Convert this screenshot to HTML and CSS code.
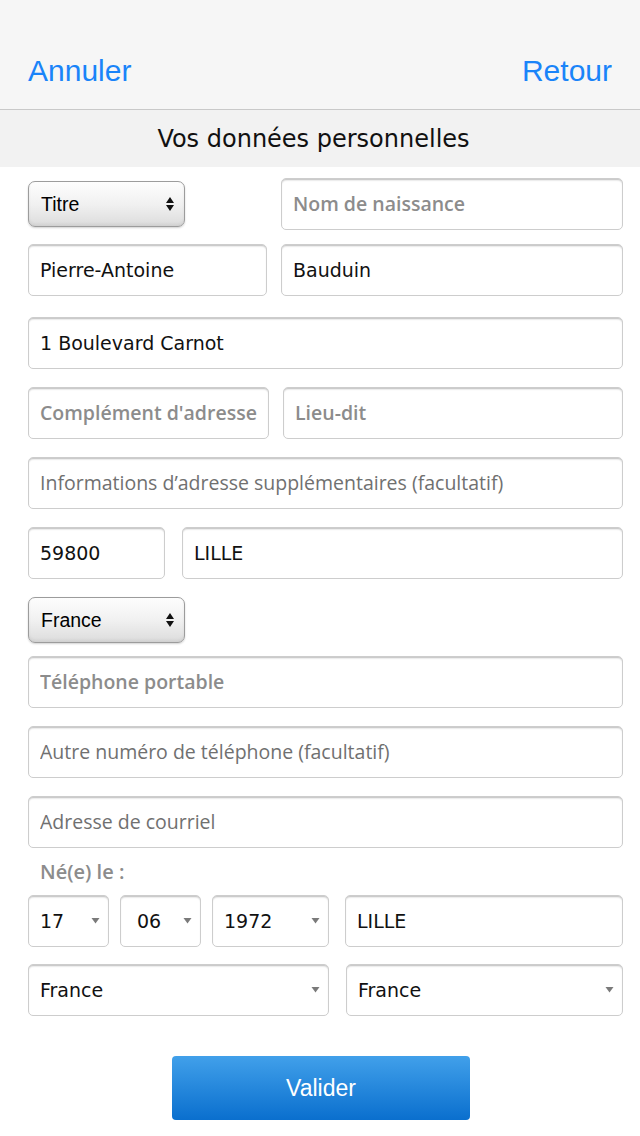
FILE: index.html
```html
<!DOCTYPE html>
<html lang="fr">
<head>
<meta charset="utf-8">
<title>Vos données personnelles</title>
<link rel="stylesheet" href="styles.css">
</head>
<body>
<header class="navbar">
  <a class="nav-btn" href="#">Annuler</a>
  <a class="nav-btn" href="#">Retour</a>
</header>
<div class="section-title">Vos données personnelles</div>
<form class="form">
  <div class="row row-first">
    <div class="select-wrap w-titre">
      <select class="ios-select"><option>Titre</option></select>
      <svg class="updown" width="10" height="16" viewBox="0 0 10 16"><path d="M5 1 L9 7 L1 7 Z M1 9 L9 9 L5 15 Z" fill="#111"/></svg>
    </div>
    <input class="field w-342 ph-bold" type="text" placeholder="Nom de naissance">
  </div>
  <div class="row row-tight">
    <input class="field grow" type="text" value="Pierre-Antoine">
    <input class="field w-342" type="text" value="Bauduin">
  </div>
  <div class="row row-loose">
    <input class="field grow" type="text" value="1 Boulevard Carnot">
  </div>
  <div class="row">
    <input class="field grow ph-bold" type="text" placeholder="Complément d'adresse">
    <input class="field w-340 ph-bold" type="text" placeholder="Lieu-dit">
  </div>
  <div class="row">
    <input class="field grow" type="text" placeholder="Informations d’adresse supplémentaires (facultatif)">
  </div>
  <div class="row row-gap17">
    <input class="field w-136" type="text" value="59800">
    <input class="field grow" type="text" value="LILLE">
  </div>
  <div class="row">
    <div class="select-wrap w-titre">
      <select class="ios-select"><option>France</option></select>
      <svg class="updown" width="10" height="16" viewBox="0 0 10 16"><path d="M5 1 L9 7 L1 7 Z M1 9 L9 9 L5 15 Z" fill="#111"/></svg>
    </div>
  </div>
  <div class="row row-after-select">
    <input class="field grow ph-bold" type="text" placeholder="Téléphone portable">
  </div>
  <div class="row">
    <input class="field grow" type="text" placeholder="Autre numéro de téléphone (facultatif)">
  </div>
  <div class="row">
    <input class="field grow" type="email" placeholder="Adresse de courriel">
  </div>
  <div class="birth-label">Né(e) le :</div>
  <div class="row row-date">
    <div class="select-wrap w-81">
      <select class="field-select"><option>17</option></select>
      <svg class="down" width="9" height="7" viewBox="0 0 9 7"><path d="M0.5 1 L8.5 1 L4.5 6.5 Z" fill="#7a7a7a"/></svg>
    </div>
    <div class="select-wrap w-81">
      <select class="field-select center"><option>06</option></select>
      <svg class="down" width="9" height="7" viewBox="0 0 9 7"><path d="M0.5 1 L8.5 1 L4.5 6.5 Z" fill="#7a7a7a"/></svg>
    </div>
    <div class="select-wrap w-117">
      <select class="field-select"><option>1972</option></select>
      <svg class="down" width="9" height="7" viewBox="0 0 9 7"><path d="M0.5 1 L8.5 1 L4.5 6.5 Z" fill="#7a7a7a"/></svg>
    </div>
    <input class="field grow city" type="text" value="LILLE">
  </div>
  <div class="row row-country">
    <div class="select-wrap grow">
      <select class="field-select"><option>France</option></select>
      <svg class="down" width="9" height="7" viewBox="0 0 9 7"><path d="M0.5 1 L8.5 1 L4.5 6.5 Z" fill="#7a7a7a"/></svg>
    </div>
    <div class="select-wrap w-277">
      <select class="field-select"><option>France</option></select>
      <svg class="down" width="9" height="7" viewBox="0 0 9 7"><path d="M0.5 1 L8.5 1 L4.5 6.5 Z" fill="#7a7a7a"/></svg>
    </div>
  </div>
  <div class="actions">
    <button class="btn-primary" type="submit">Valider</button>
  </div>
</form>
</body>
</html>
```
FILE: styles.css
```css
* { box-sizing: border-box; }
html, body { margin: 0; padding: 0; background: #fff; }
body { font-family: "DejaVu Sans", "Liberation Sans", sans-serif; color: #000; }

.navbar {
  height: 110px;
  background: #f6f6f6;
  border-bottom: 1px solid #c9c9c9;
  display: flex;
  justify-content: space-between;
  align-items: flex-end;
  padding: 0 28px 21px 28px;
}
.nav-btn {
  font-family: "Liberation Sans", Arial, sans-serif;
  font-size: 30px;
  line-height: 34px;
  color: #1a84f9;
  text-decoration: none;
}

.section-title {
  height: 57px;
  background: #f2f2f2;
  display: flex;
  align-items: center;
  justify-content: center;
  padding-right: 13px;
  font-size: 24px;
  color: #111;
}

.form {
  display: flex;
  flex-direction: column;
  gap: 18px;
  padding: 11px 17px 0 28px;
}
.row {
  display: flex;
  align-items: center;
  gap: 14px;
}
.row-first { justify-content: space-between; }
.row-tight { margin-top: -4px; }
.row-loose { margin-top: 3px; }
.row-gap17 { gap: 17px; }
.row-after-select { margin-top: -5px; }
.row-date { gap: 11px; }
.row-date .city { margin-left: 5px; }
.row-country { margin-top: -1px; gap: 17px; }

.grow { flex: 1 1 auto; min-width: 0; }
.w-342 { width: 342px; flex: none; }
.w-340 { width: 340px; flex: none; }
.w-136 { width: 137px; flex: none; }
.w-titre { width: 157px; flex: none; }
.w-81 { width: 81px; flex: none; }
.w-117 { width: 117px; flex: none; }
.w-277 { width: 277px; flex: none; }

.field, .field-select {
  height: 52px;
  border: 1px solid #cdcdcd;
  border-radius: 5px;
  background: #fff;
  box-shadow: inset 0 2px 2px -1px rgba(0, 0, 0, 0.28);
  padding: 0 5px 0 11px;
  font-family: "DejaVu Sans", sans-serif;
  font-size: 19px;
  color: #111;
  outline: none;
}
.field::placeholder {
  font-family: "Open Sans", sans-serif;
  font-size: 19.5px;
  color: #707070;
  opacity: 1;
}
.field.ph-bold::placeholder {
  font-weight: 600;
  font-size: 19.5px;
  color: #8c8c8c;
}

.select-wrap { position: relative; }
.ios-select {
  -webkit-appearance: none;
  appearance: none;
  width: 100%;
  height: 46px;
  border: 1px solid #9c9c9c;
  border-radius: 7px;
  background: linear-gradient(#fdfdfd 0%, #f1f1f1 50%, #dcdcdc 100%);
  box-shadow: 0 1px 2px rgba(0, 0, 0, 0.18), inset 0 -2px 3px rgba(0, 0, 0, 0.06);
  padding: 0 12px;
  font-family: "Liberation Sans", Arial, sans-serif;
  font-size: 19.5px;
  color: #000;
  outline: none;
}
.updown {
  position: absolute;
  right: 10px;
  top: 15px;
}
.field-select {
  -webkit-appearance: none;
  appearance: none;
  width: 100%;
}
.field-select.center { padding-left: 16px; }
.down {
  position: absolute;
  right: 9px;
  top: 22px;
}

.birth-label {
  font-family: "Open Sans", sans-serif;
  font-weight: 600;
  font-size: 20px;
  line-height: 26px;
  color: #8c8c8c;
  padding-left: 12px;
  margin: -7px 0 -8px;
}

.actions {
  display: flex;
  justify-content: center;
  margin-top: 22px;
  padding-right: 9px;
}
.btn-primary {
  width: 298px;
  height: 64px;
  border: none;
  border-radius: 4px;
  background: linear-gradient(#41a0ea, #0a6fce);
  color: #fff;
  font-family: "Liberation Sans", Arial, sans-serif;
  font-size: 23px;
}
```
